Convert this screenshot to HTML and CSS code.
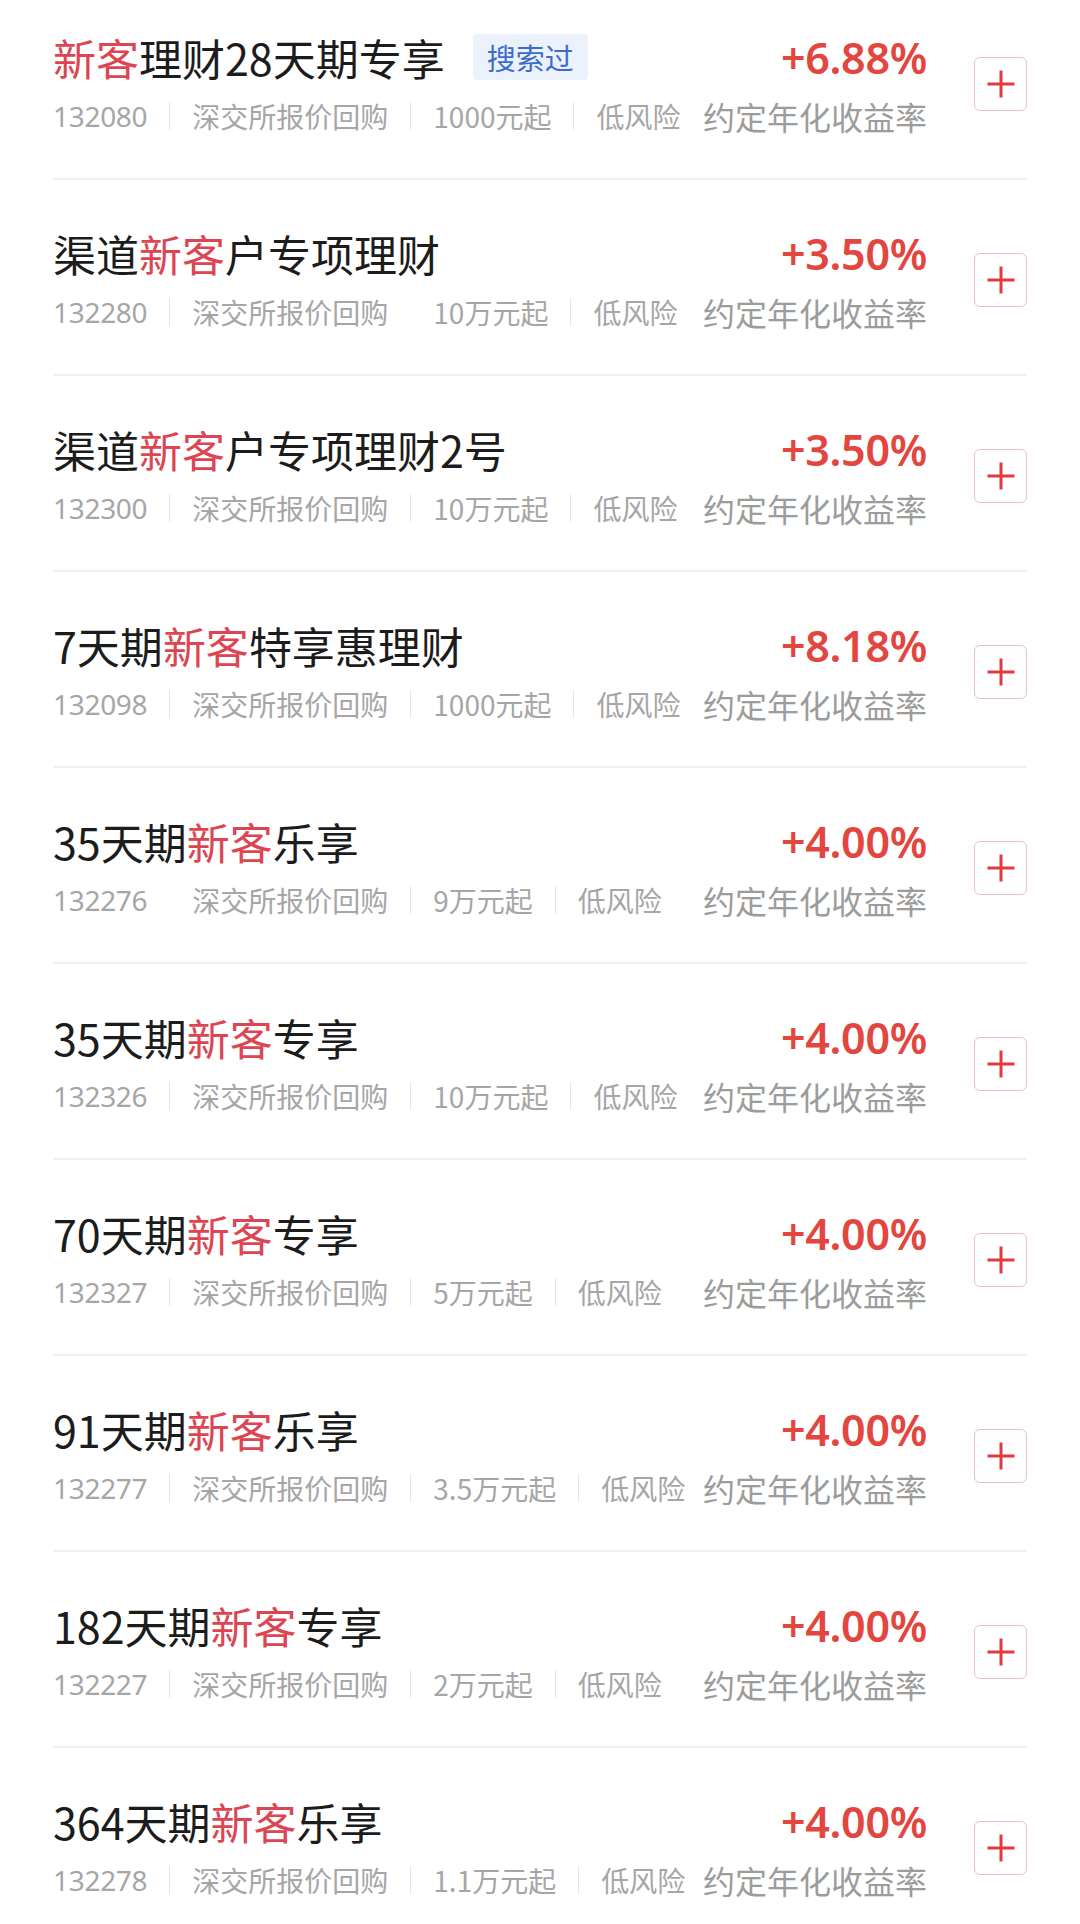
FILE: index.html
```html
<!DOCTYPE html>
<html lang="zh-CN">
<head>
    <meta charset="UTF-8">
    <meta name="viewport" content="width=device-width, initial-scale=1.0">
    <title>新客理财</title>
    <link rel="stylesheet" href="styles.css">
</head>
<body>
    <ul class="product-list">
        <li class="product">
            <div class="product-main">
                <div class="product-head">
                    <span class="product-name"><em>新客</em>理财28天期专享</span>
                    <span class="tag">搜索过</span>
                    <span class="rate">+6.88%</span>
                </div>
                <div class="product-meta">
                    <span class="code">132080</span><i class="sep"></i>
                    <span>深交所报价回购</span><i class="sep"></i>
                    <span>1000元起</span><i class="sep"></i>
                    <span>低风险</span>
                    <span class="rate-label">约定年化收益率</span>
                </div>
            </div>
            <button class="add-btn" aria-label="添加"></button>
        </li>

        <li class="product">
            <div class="product-main">
                <div class="product-head">
                    <span class="product-name">渠道<em>新客</em>户专项理财</span>
                    <span class="rate">+3.50%</span>
                </div>
                <div class="product-meta">
                    <span class="code">132280</span><i class="sep"></i>
                    <span>深交所报价回购</span><i class="sep blank"></i>
                    <span>10万元起</span><i class="sep"></i>
                    <span>低风险</span>
                    <span class="rate-label">约定年化收益率</span>
                </div>
            </div>
            <button class="add-btn" aria-label="添加"></button>
        </li>

        <li class="product">
            <div class="product-main">
                <div class="product-head">
                    <span class="product-name">渠道<em>新客</em>户专项理财2号</span>
                    <span class="rate">+3.50%</span>
                </div>
                <div class="product-meta">
                    <span class="code">132300</span><i class="sep"></i>
                    <span>深交所报价回购</span><i class="sep"></i>
                    <span>10万元起</span><i class="sep"></i>
                    <span>低风险</span>
                    <span class="rate-label">约定年化收益率</span>
                </div>
            </div>
            <button class="add-btn" aria-label="添加"></button>
        </li>

        <li class="product">
            <div class="product-main">
                <div class="product-head">
                    <span class="product-name">7天期<em>新客</em>特享惠理财</span>
                    <span class="rate">+8.18%</span>
                </div>
                <div class="product-meta">
                    <span class="code">132098</span><i class="sep"></i>
                    <span>深交所报价回购</span><i class="sep"></i>
                    <span>1000元起</span><i class="sep"></i>
                    <span>低风险</span>
                    <span class="rate-label">约定年化收益率</span>
                </div>
            </div>
            <button class="add-btn" aria-label="添加"></button>
        </li>

        <li class="product">
            <div class="product-main">
                <div class="product-head">
                    <span class="product-name">35天期<em>新客</em>乐享</span>
                    <span class="rate">+4.00%</span>
                </div>
                <div class="product-meta">
                    <span class="code">132276</span><i class="sep blank"></i>
                    <span>深交所报价回购</span><i class="sep"></i>
                    <span>9万元起</span><i class="sep"></i>
                    <span>低风险</span>
                    <span class="rate-label">约定年化收益率</span>
                </div>
            </div>
            <button class="add-btn" aria-label="添加"></button>
        </li>

        <li class="product">
            <div class="product-main">
                <div class="product-head">
                    <span class="product-name">35天期<em>新客</em>专享</span>
                    <span class="rate">+4.00%</span>
                </div>
                <div class="product-meta">
                    <span class="code">132326</span><i class="sep"></i>
                    <span>深交所报价回购</span><i class="sep"></i>
                    <span>10万元起</span><i class="sep"></i>
                    <span>低风险</span>
                    <span class="rate-label">约定年化收益率</span>
                </div>
            </div>
            <button class="add-btn" aria-label="添加"></button>
        </li>

        <li class="product">
            <div class="product-main">
                <div class="product-head">
                    <span class="product-name">70天期<em>新客</em>专享</span>
                    <span class="rate">+4.00%</span>
                </div>
                <div class="product-meta">
                    <span class="code">132327</span><i class="sep"></i>
                    <span>深交所报价回购</span><i class="sep"></i>
                    <span>5万元起</span><i class="sep"></i>
                    <span>低风险</span>
                    <span class="rate-label">约定年化收益率</span>
                </div>
            </div>
            <button class="add-btn" aria-label="添加"></button>
        </li>

        <li class="product">
            <div class="product-main">
                <div class="product-head">
                    <span class="product-name">91天期<em>新客</em>乐享</span>
                    <span class="rate">+4.00%</span>
                </div>
                <div class="product-meta">
                    <span class="code">132277</span><i class="sep"></i>
                    <span>深交所报价回购</span><i class="sep"></i>
                    <span>3.5万元起</span><i class="sep"></i>
                    <span>低风险</span>
                    <span class="rate-label">约定年化收益率</span>
                </div>
            </div>
            <button class="add-btn" aria-label="添加"></button>
        </li>

        <li class="product">
            <div class="product-main">
                <div class="product-head">
                    <span class="product-name">182天期<em>新客</em>专享</span>
                    <span class="rate">+4.00%</span>
                </div>
                <div class="product-meta">
                    <span class="code">132227</span><i class="sep"></i>
                    <span>深交所报价回购</span><i class="sep"></i>
                    <span>2万元起</span><i class="sep"></i>
                    <span>低风险</span>
                    <span class="rate-label">约定年化收益率</span>
                </div>
            </div>
            <button class="add-btn" aria-label="添加"></button>
        </li>

        <li class="product">
            <div class="product-main">
                <div class="product-head">
                    <span class="product-name">364天期<em>新客</em>乐享</span>
                    <span class="rate">+4.00%</span>
                </div>
                <div class="product-meta">
                    <span class="code">132278</span><i class="sep"></i>
                    <span>深交所报价回购</span><i class="sep"></i>
                    <span>1.1万元起</span><i class="sep"></i>
                    <span>低风险</span>
                    <span class="rate-label">约定年化收益率</span>
                </div>
            </div>
            <button class="add-btn" aria-label="添加"></button>
        </li>
    </ul>
</body>
</html>
```

FILE: styles.css
```css
/* General */
body {
    margin: 0;
    background-color: #fff;
    font-family: "Noto Sans", "Noto Sans CJK SC", sans-serif;
    overflow: hidden;
}

.product-list {
    list-style: none;
    margin: 0 53px;
    padding: 0;
}

/* One product row */
.product {
    display: flex;
    align-items: center;
    padding: 48px 0 42px;
    border-bottom: 2px solid #f0f0f0;
}

.product:first-child {
    padding-top: 32px;
}

.product:last-child {
    border-bottom: none;
}

.product-main {
    flex: 1;
    min-width: 0;
}

.product-head {
    display: flex;
    align-items: center;
    height: 50px;
}

.product-name {
    font-family: "Noto Sans CJK SC", sans-serif;
    font-size: 43px;
    line-height: 50px;
    color: #1c1c1c;
}

.product-name em {
    font-style: normal;
    color: #dd4552;
}

.tag {
    margin-left: 28px;
    padding: 0 14px;
    height: 46px;
    line-height: 46px;
    font-family: "Noto Sans CJK SC", sans-serif;
    font-size: 29px;
    color: #3e6ccc;
    background-color: #ebf2fc;
    border-radius: 4px;
}

.rate {
    margin-left: auto;
    font-size: 43px;
    font-weight: 600;
    color: #e3453f;
    letter-spacing: -0.3px;
}

/* Meta line */
.product-meta {
    display: flex;
    align-items: center;
    height: 40px;
    margin-top: 14px;
    font-family: "Noto Sans CJK SC", sans-serif;
    font-size: 28px;
    color: #a6a6a6;
}

.product-meta .code {
    font-family: "Noto Sans", sans-serif;
    letter-spacing: -0.3px;
}

.sep {
    width: 1px;
    height: 28px;
    margin: 0 22px;
    background-color: #e4e4e4;
}

.sep.blank {
    visibility: hidden;
}

.rate-label {
    margin-left: auto;
    font-size: 32px;
    color: #9c9c9c;
}

/* Add button */
.add-btn {
    position: relative;
    flex-shrink: 0;
    width: 53px;
    height: 54px;
    margin-left: 47px;
    padding: 0;
    background: #fff;
    border: 1.5px solid #e6c3c7;
    border-radius: 6px;
    cursor: pointer;
}

.add-btn::before,
.add-btn::after {
    content: "";
    position: absolute;
    left: 50%;
    top: 50%;
    background-color: #e03a45;
}

.add-btn::before {
    width: 27px;
    height: 3px;
    transform: translate(-50%, -50%);
}

.add-btn::after {
    width: 3px;
    height: 27px;
    transform: translate(-50%, -50%);
}
```
